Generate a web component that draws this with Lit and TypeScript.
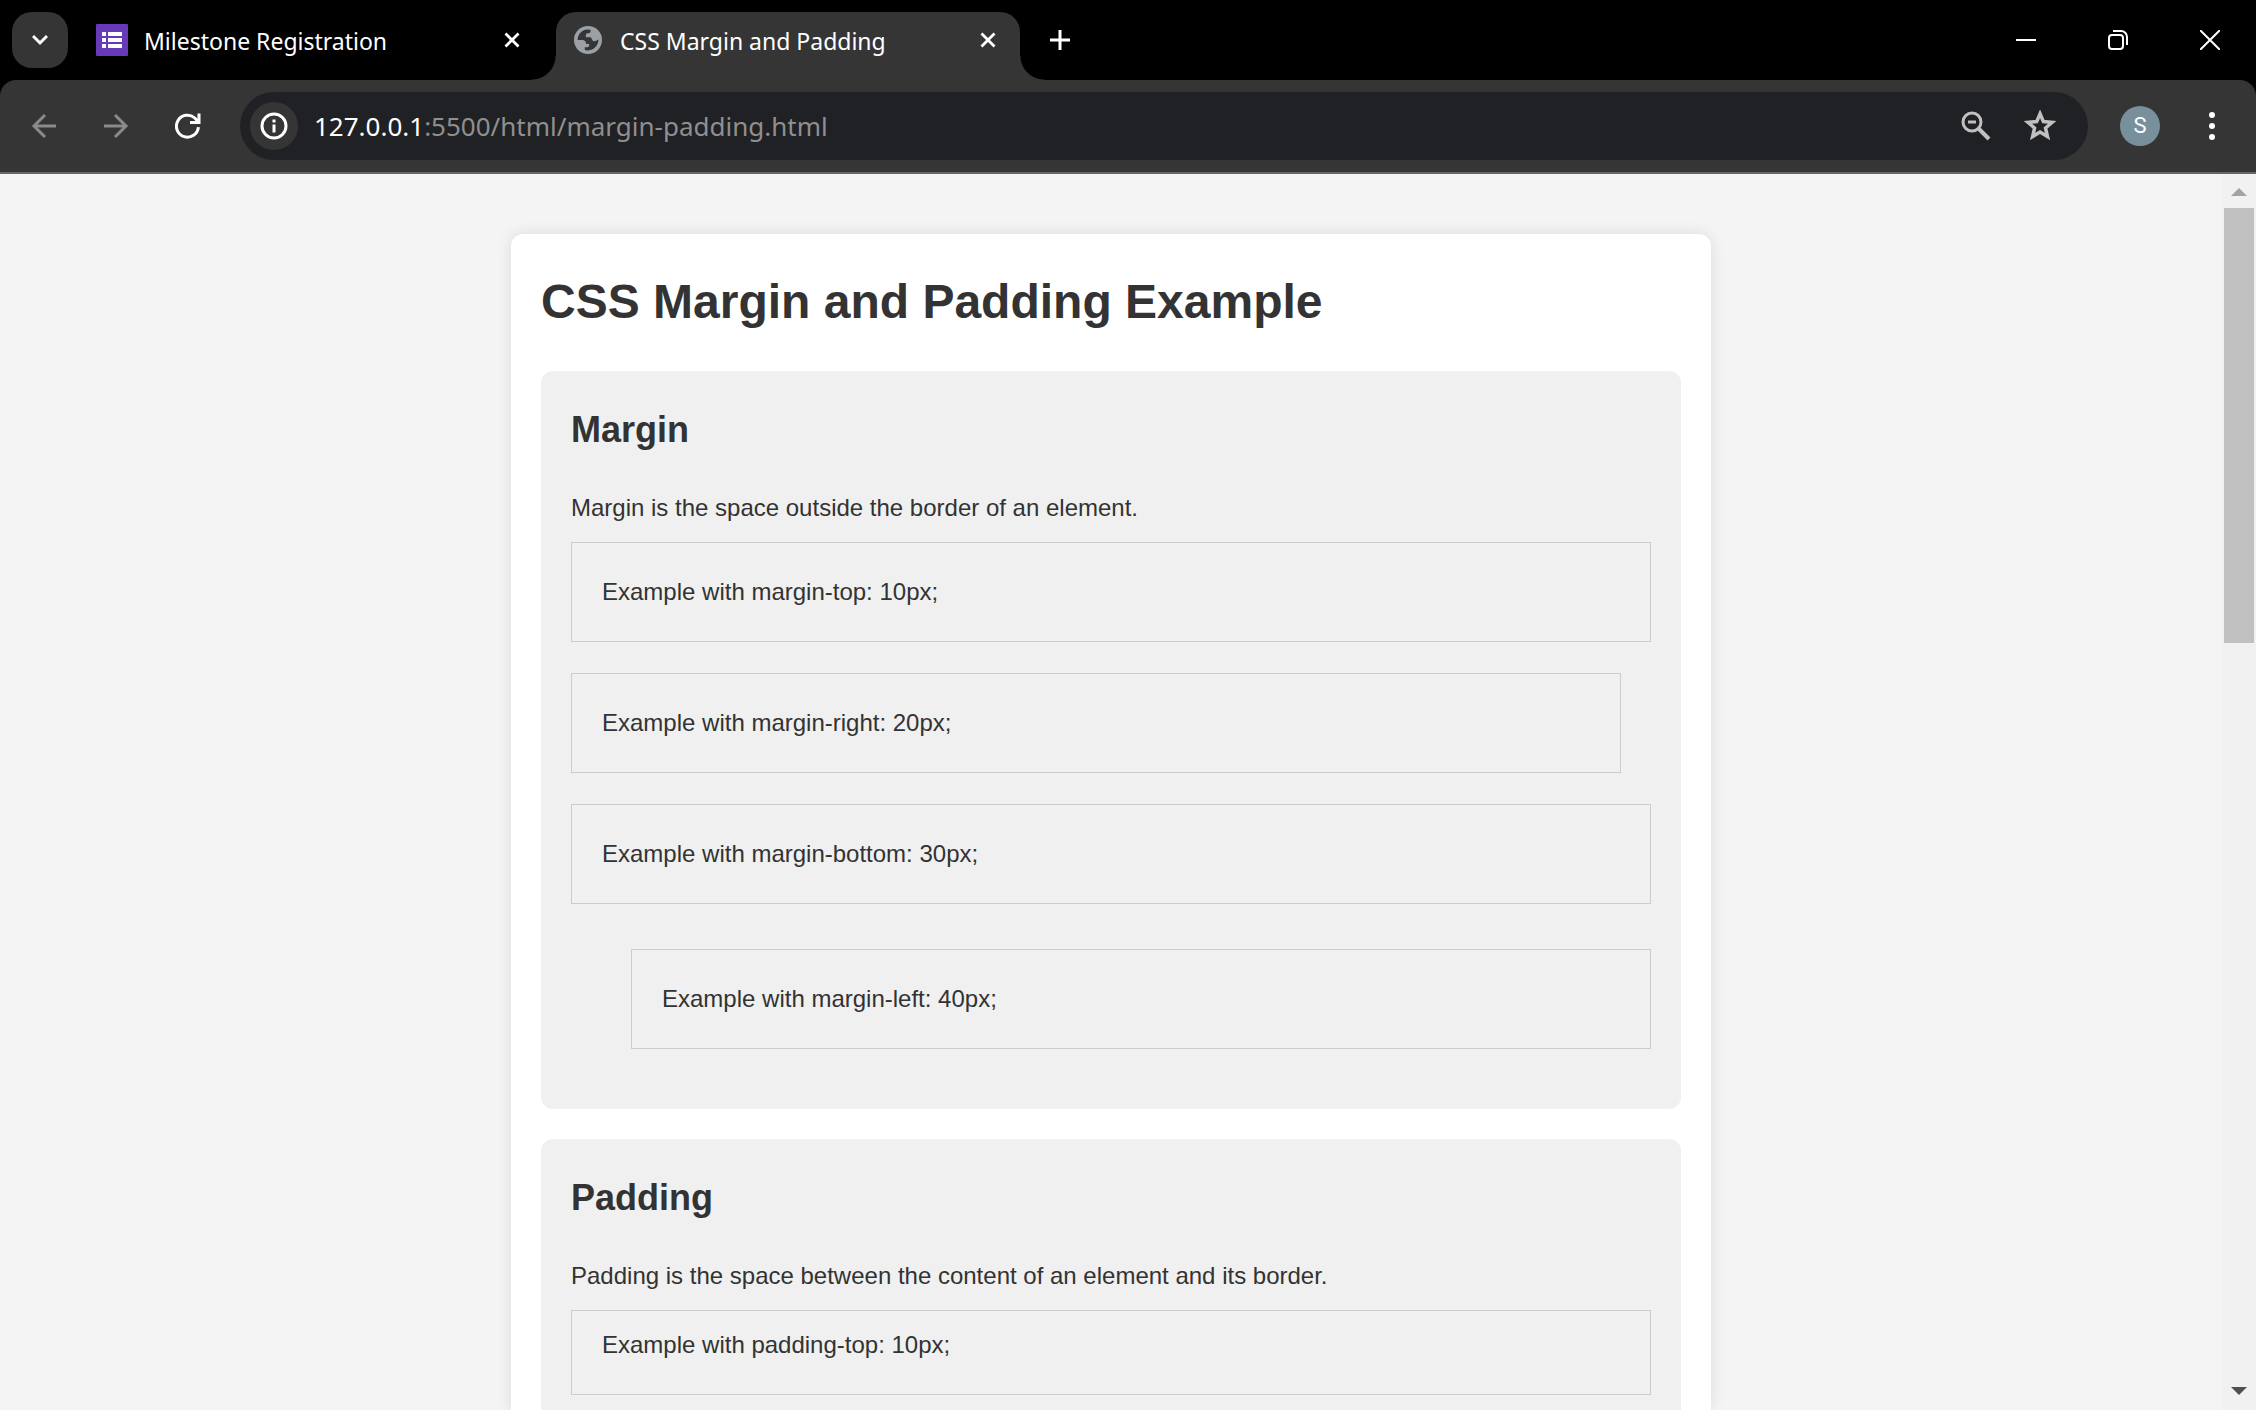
import { LitElement, html, css, svg } from "lit";
import { customElement } from "lit/decorators.js";

interface Example {
  text: string;
  kind: string;
}

interface Topic {
  title: string;
  intro: string;
  examples: Example[];
}

const TOPICS: Topic[] = [
  {
    title: "Margin",
    intro: "Margin is the space outside the border of an element.",
    examples: [
      { text: "Example with margin-top: 10px;", kind: "margin-top" },
      { text: "Example with margin-right: 20px;", kind: "margin-right" },
      { text: "Example with margin-bottom: 30px;", kind: "margin-bottom" },
      { text: "Example with margin-left: 40px;", kind: "margin-left" },
    ],
  },
  {
    title: "Padding",
    intro: "Padding is the space between the content of an element and its border.",
    examples: [{ text: "Example with padding-top: 10px;", kind: "padding-top" }],
  },
];

const closeGlyph = html`<svg width="16" height="16" viewBox="0 0 16 16" aria-hidden="true">
  <path d="M1.5 1.5 14.5 14.5M14.5 1.5 1.5 14.5" stroke="currentColor" stroke-width="2.8" fill="none" />
</svg>`;

@customElement("browser-tabs")
class BrowserTabs extends LitElement {
  static styles = css`
    :host {
      display: flex;
      align-items: stretch;
      height: 80px;
      box-sizing: border-box;
      padding-left: 12px;
      background: #000;
      color: #fff;
      font-family: "Noto Sans", "Open Sans", sans-serif;
    }
    button {
      border: 0;
      padding: 0;
      background: none;
      color: inherit;
      display: flex;
      align-items: center;
      justify-content: center;
    }
    svg {
      display: block;
      flex: none;
    }
    .search {
      width: 56px;
      height: 56px;
      align-self: center;
      border-radius: 20px;
      background: #353535;
    }
    .tab {
      display: flex;
      align-items: center;
      box-sizing: border-box;
      width: 464px;
      height: 68px;
      margin-top: 12px;
      padding: 0 24px 12px 18px;
      gap: 18px;
      white-space: nowrap;
    }
    .tab.idle {
      width: 488px;
      padding: 0 36px 12px 28px;
      gap: 16px;
    }
    .tab.active {
      position: relative;
      background: #353535;
      border-radius: 20px 20px 0 0;
    }
    .tab.active::before,
    .tab.active::after {
      content: "";
      position: absolute;
      bottom: 0;
      width: 24px;
      height: 24px;
    }
    .tab.active::before {
      right: 100%;
      background: radial-gradient(circle at 0 0, transparent 23px, #353535 24px);
    }
    .tab.active::after {
      left: 100%;
      background: radial-gradient(circle at 100% 0, transparent 23px, #353535 24px);
    }
    .title {
      flex: 1;
      padding-top: 2px;
      font-size: 23px;
      line-height: 32px;
    }
    .new {
      width: 40px;
      height: 40px;
      margin-left: 20px;
      align-self: center;
    }
    .controls {
      display: flex;
      margin-left: auto;
    }
    .controls button {
      width: 92px;
    }
  `;

  render() {
    return html`
      <button class="search" aria-label="Search tabs">
        <svg width="16" height="12" viewBox="0 0 16 12">
          <path d="M1 2 8 9 15 2" fill="none" stroke="#fff" stroke-width="3" />
        </svg>
      </button>
      <div class="tab idle">
        <svg width="32" height="32" viewBox="0 0 32 32" aria-hidden="true">
          <rect width="32" height="32" rx="1" fill="#673ab7" />
          <path d="M6 8h4v4H6zM12 8h14v4H12zM6 14h4v4H6zM12 14h14v4H12zM6 20h4v4H6zM12 20h14v4H12z" fill="#fff" />
        </svg>
        <span class="title">Milestone Registration</span>
        <button aria-label="Close Milestone Registration">${closeGlyph}</button>
      </div>
      <div class="tab active">
        <svg width="28" height="28" viewBox="0 0 28 28" aria-hidden="true">
          <circle cx="14" cy="14" r="14" fill="#9aa0a6" />
          <path
            fill="#353535"
            d="M3.600 14C3.600 8.500 8 4 13 3.600L16.500 3.800V5.500C16.500 7.300 15 7.200 12.500 7.500C11.500 8.500 12 9.500 11.800 11.300H16.300C18.300 11.800 17.600 14.500 19.500 15.200C21.500 15.600 22.600 14.500 24.400 13.600C24.400 19.500 20 24.300 14 24.400L10.800 24V21.200C13 21.400 15.200 21.200 15.200 19.500V18H12.300C12 15.500 10.500 14 8 14Z"
          />
        </svg>
        <span class="title">CSS Margin and Padding</span>
        <button aria-label="Close CSS Margin and Padding">${closeGlyph}</button>
      </div>
      <button class="new" aria-label="New tab">
        <svg width="20" height="20" viewBox="0 0 20 20">
          <path d="M10 0v20M0 10h20" stroke="#fff" stroke-width="3" />
        </svg>
      </button>
      <div class="controls">
        <button aria-label="Minimize">
          <svg width="20" height="20" viewBox="0 0 20 20"><path d="M0 10h20" stroke="#fff" stroke-width="2" /></svg>
        </button>
        <button aria-label="Restore">
          <svg width="20" height="20" viewBox="0 0 20 20" fill="none" stroke="#fff" stroke-width="2">
            <rect x="1" y="5" width="14" height="14" rx="3" />
            <path d="M5 1h8a6 6 0 0 1 6 6v8" />
          </svg>
        </button>
        <button aria-label="Close window">
          <svg width="20" height="20" viewBox="0 0 20 20">
            <path d="M0 0 20 20M20 0 0 20" stroke="#fff" stroke-width="2" />
          </svg>
        </button>
      </div>
    `;
  }
}

@customElement("browser-toolbar")
class BrowserToolbar extends LitElement {
  static styles = css`
    :host {
      display: block;
      background: #000;
      font-family: "Noto Sans", "Open Sans", sans-serif;
    }
    .bar {
      display: flex;
      align-items: center;
      box-sizing: border-box;
      height: 94px;
      padding: 0 22px 0 8px;
      border-bottom: 2px solid #666;
      border-radius: 16px 16px 0 0;
      background: #353535;
    }
    button {
      border: 0;
      padding: 0;
      background: none;
      display: flex;
      align-items: center;
      justify-content: center;
      width: 72px;
      height: 68px;
      flex: none;
    }
    svg {
      display: block;
    }
    .box {
      flex: 1;
      display: flex;
      align-items: center;
      box-sizing: border-box;
      height: 68px;
      margin: 0 24px 0 16px;
      padding: 0 16px 0 10px;
      border-radius: 34px;
      background: #202124;
    }
    .box .info {
      width: 48px;
      height: 48px;
      border-radius: 50%;
      background: #353535;
    }
    .box .tool {
      width: 64px;
    }
    .url {
      flex: 1;
      padding-left: 16px;
      font-size: 26px;
      line-height: 36px;
      color: #8f8f8f;
      white-space: nowrap;
    }
    .host {
      color: #fff;
    }
    .avatar {
      width: 40px;
      height: 40px;
      margin: 0 8px;
      border-radius: 50%;
      background: #78909c;
      color: #fff;
      font-family: Roboto, sans-serif;
      font-size: 22px;
      line-height: 40px;
    }
    .menu {
      width: 44px;
      margin-left: 22px;
    }
  `;

  render() {
    return html`
      <div class="bar">
        <button aria-label="Back">
          <svg width="26" height="26" viewBox="0 0 26 26" fill="none" stroke="#8a8a8a" stroke-width="3">
            <path d="M25 13H3M14 2 3 13 14 24" />
          </svg>
        </button>
        <button aria-label="Forward">
          <svg width="26" height="26" viewBox="0 0 26 26" fill="none" stroke="#8a8a8a" stroke-width="3">
            <path d="M1 13H23M12 2 23 13 12 24" />
          </svg>
        </button>
        <button aria-label="Reload">
          <svg width="26" height="26" viewBox="0 0 26 26" fill="none" stroke="#fff" stroke-width="3">
            <path d="M23.400 14.200A11 11 0 1 1 19.800 5L23 8.500M24 0.500V9.500H15" />
          </svg>
        </button>
        <div class="box">
          <button class="info" aria-label="View site information">
            <svg width="28" height="28" viewBox="0 0 28 28" fill="none" stroke="#fff" stroke-width="3">
              <circle cx="14" cy="14" r="12" />
              <path d="M14 12.500v8M14 7.500v3" />
            </svg>
          </button>
          <span class="url"><span class="host">127.0.0.1</span>:5500/html/margin-padding.html</span>
          <button class="tool" aria-label="Zoom">
            <svg width="30" height="30" viewBox="0 0 30 30" fill="none" stroke="#c0c0c0" stroke-width="3">
              <circle cx="11" cy="11" r="9" />
              <path d="M7 11h8" />
              <path d="M17.500 17.500 28 28" stroke-width="4" />
            </svg>
          </button>
          <button class="tool" aria-label="Bookmark this tab">
            <svg width="34" height="32" viewBox="0 0 34 32">
              <path
                d="M17 4.500 20.200 12 28.500 12.700 22.200 18.100 24.100 26.200 17 21.900 9.900 26.200 11.800 18.100 5.500 12.700 13.800 12Z"
                transform="translate(-0.8 -1) scale(1.050)"
                fill="none"
                stroke="#c0c0c0"
                stroke-width="3.300"
              />
            </svg>
          </button>
        </div>
        <button class="avatar" aria-label="Profile">S</button>
        <button class="menu" aria-label="Menu">
          <svg width="6" height="28" viewBox="0 0 6 28" fill="#fff">
            ${[3, 14, 25].map((y) => svg`<circle cx="3" cy=${y} r="3" />`)}
          </svg>
        </button>
      </div>
    `;
  }
}

@customElement("app-root")
class AppRoot extends LitElement {
  static styles = css`
    :host {
      display: flex;
      flex-direction: column;
      height: 100vh;
      overflow: hidden;
      font-family: Arial, "Liberation Sans", sans-serif;
      color: #333;
    }
    .view {
      flex: 1;
      min-height: 0;
      display: flex;
      background: #f4f4f4;
    }
    .page {
      flex: 1;
      display: flex;
      justify-content: center;
      padding-top: 60px;
      overflow: hidden;
    }
    .card {
      display: flex;
      flex-direction: column;
      box-sizing: border-box;
      width: 100%;
      max-width: 1200px;
      padding: 30px 30px 0;
      border-radius: 12px 12px 0 0;
      background: #fff;
      box-shadow: 0 0 15px rgba(0, 0, 0, 0.1);
    }
    h1,
    h2,
    p {
      margin: 0;
    }
    h1 {
      margin-bottom: 32px;
      font-size: 48px;
      line-height: 75px;
    }
    h2 {
      margin-bottom: 30px;
      font-size: 36px;
      line-height: 58px;
    }
    p {
      font-size: 24px;
      line-height: 38px;
    }
    .topic {
      padding: 30px;
      margin-bottom: 30px;
      border-radius: 12px;
      background: #f0f0f0;
    }
    .topic:last-child {
      flex: 1;
      margin-bottom: 0;
      padding-bottom: 0;
      border-radius: 12px 12px 0 0;
    }
    .intro {
      margin-bottom: 15px;
    }
    .example {
      padding: 30px;
      margin-bottom: 31px;
      border: 1px solid #ccc;
    }
    .example:last-child {
      margin-bottom: 30px;
    }
    .margin-right {
      margin-right: 30px;
    }
    .margin-bottom {
      margin-bottom: 45px;
    }
    .margin-left {
      margin-left: 60px;
    }
    .padding-top {
      padding-top: 15px;
    }
    .scrollbar {
      display: flex;
      flex-direction: column;
      align-items: center;
      width: 34px;
      box-sizing: border-box;
      padding: 14px 0 15px;
      background: #f1f1f1;
    }
    .thumb {
      width: 30px;
      flex: 0 0 36%;
      margin: 12px 0 auto;
      background: #c1c1c1;
    }
    svg {
      display: block;
    }
  `;

  render() {
    return html`
      <browser-tabs></browser-tabs>
      <browser-toolbar></browser-toolbar>
      <div class="view">
        <main class="page">
          <article class="card">
            <h1>CSS Margin and Padding Example</h1>
            ${TOPICS.map(
              (topic) => html`
                <section class="topic">
                  <h2>${topic.title}</h2>
                  <p class="intro">${topic.intro}</p>
                  ${topic.examples.map((e) => html`<div class="example ${e.kind}"><p>${e.text}</p></div>`)}
                </section>
              `
            )}
          </article>
        </main>
        <div class="scrollbar">
          <svg width="16" height="8" viewBox="0 0 16 8"><path d="M0 8 8 0 16 8Z" fill="#a3a3a3" /></svg>
          <div class="thumb"></div>
          <svg width="16" height="8" viewBox="0 0 16 8"><path d="M0 0 8 8 16 0Z" fill="#505050" /></svg>
        </div>
      </div>
    `;
  }
}
